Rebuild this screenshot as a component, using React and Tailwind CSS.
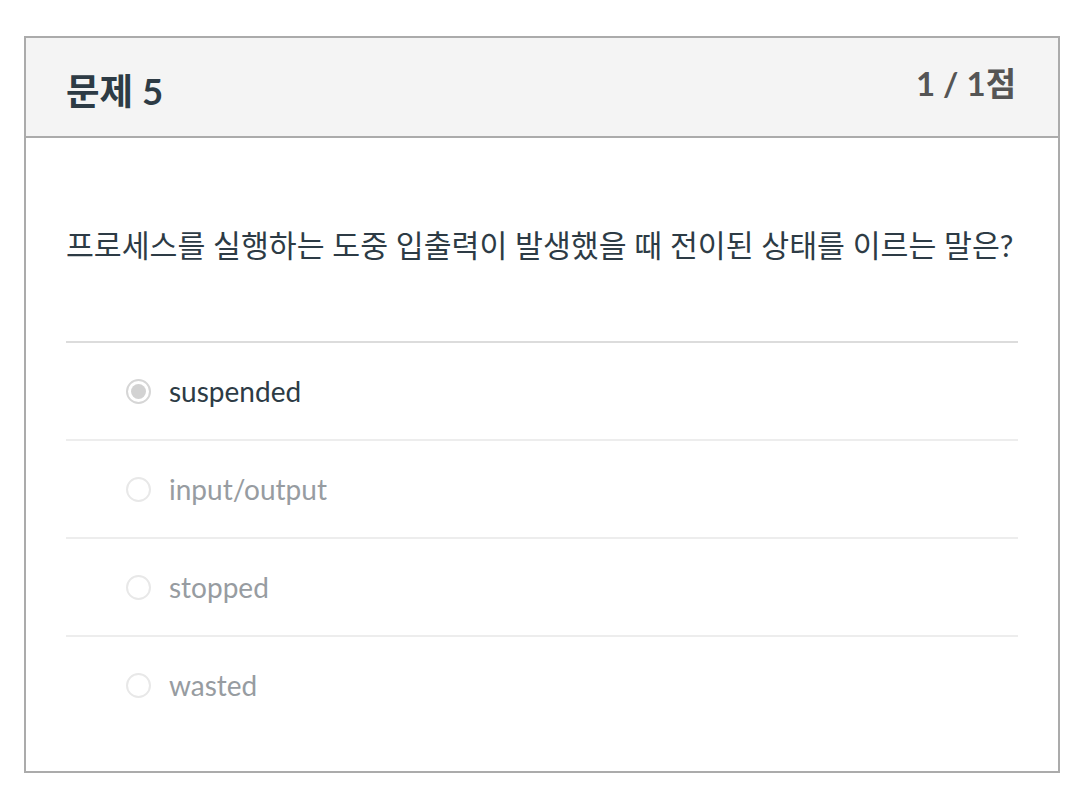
export default function App() {
  const font = { fontFamily: 'Lato, "Noto Sans CJK KR", sans-serif' };
  const options = [
    { label: "suspended", selected: true },
    { label: "input/output" },
    { label: "stopped" },
    { label: "wasted" },
  ];
  return (
    <div className="w-[1078px] h-[806px] bg-white pt-[36px] pl-[24px]" style={font}>
      <div className="w-[1036px] h-[737px] border-2 border-[#ababab] flex flex-col">
        <div className="h-[100px] bg-[#f4f4f4] border-b-2 border-[#ababab] flex justify-between px-[40px] shrink-0">
          <div className="text-[36.5px] font-bold text-[#2d3b45] pt-[30px] leading-[46px]">문제 5</div>
          <div className="text-[33px] font-bold text-[#555555] pt-[24px] leading-[42px] pr-[2px]">1 / 1점</div>
        </div>
        <div className="px-[40px] flex flex-col">
          <div className="text-[30.3px] text-[#2d3b45] mt-[87px] leading-[40px] whitespace-nowrap">
            프로세스를 실행하는 도중 입출력이 발생했을 때 전이된 상태를 이르는 말은?
          </div>
          <div className="mt-[76px]">
            {options.map((o, i) => (
              <div
                key={o.label}
                className={`h-[98px] flex items-center pl-[60px] border-t-2 ${i === 0 ? "border-[#dcdcdc]" : "border-[#ededed]"}`}
              >
                <div
                  className={`w-[25px] h-[25px] rounded-full border-2 flex items-center justify-center ${
                    o.selected ? "border-[#d6d6d6] bg-white" : "border-[#e8e8e8] bg-white"
                  }`}
                >
                  {o.selected && <div className="w-[15px] h-[15px] rounded-full bg-[#d2d2d2]" />}
                </div>
                <div
                  className={`ml-[18px] text-[28px] leading-[36px] ${
                    o.selected ? "text-[#2d3b45]" : "text-[#979ca1]"
                  }`}
                >
                  {o.label}
                </div>
              </div>
            ))}
          </div>
        </div>
      </div>
    </div>
  );
}
